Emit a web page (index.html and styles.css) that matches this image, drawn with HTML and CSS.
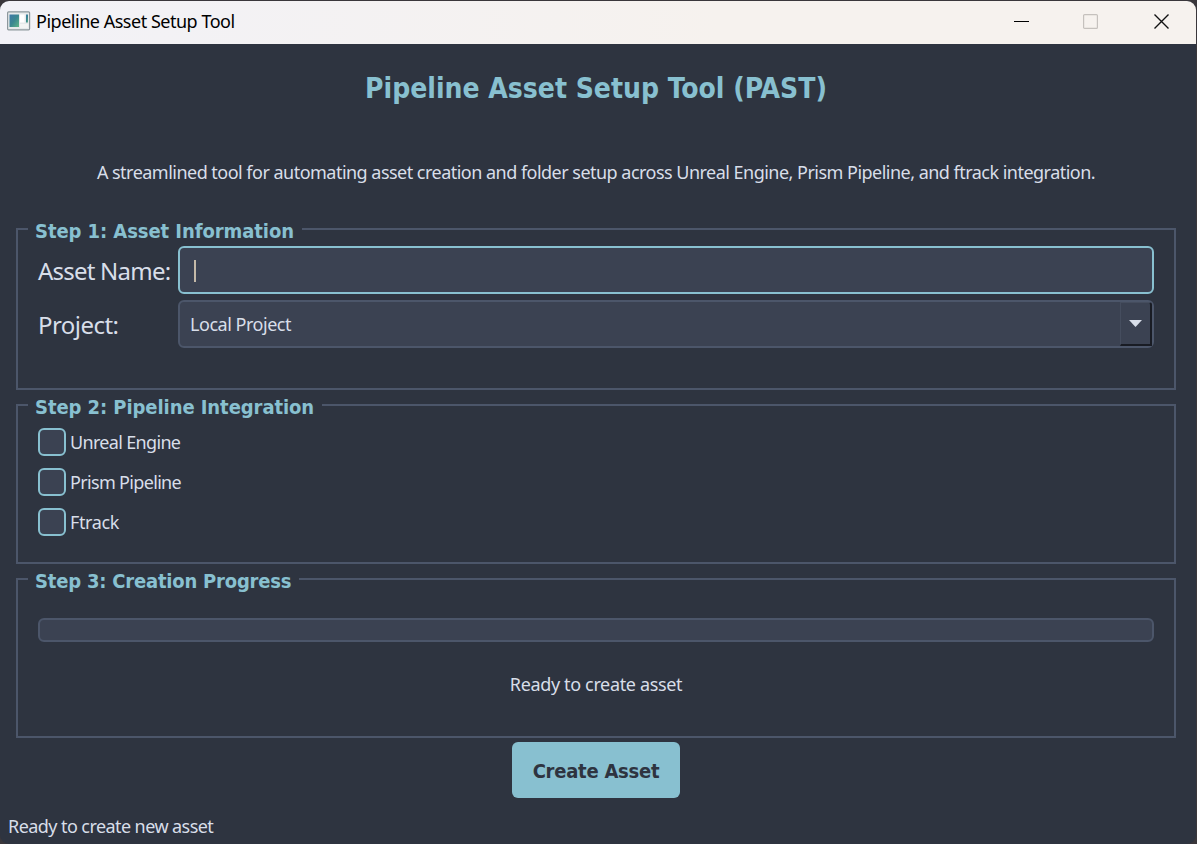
FILE: index.html
```html
<!DOCTYPE html>
<html lang="en">
<head>
<meta charset="utf-8">
<title>Pipeline Asset Setup Tool</title>
<link rel="stylesheet" href="styles.css">
</head>
<body>
<div class="window">
  <header class="titlebar">
    <svg class="app-icon" width="24" height="20" viewBox="0 0 24 20">
      <defs><linearGradient id="g" x1="0" y1="0" x2="1" y2="1"><stop offset="0" stop-color="#3f78a8"/><stop offset=".5" stop-color="#3a8790"/><stop offset="1" stop-color="#5fb587"/></linearGradient></defs>
      <rect x=".6" y=".8" width="22" height="18" rx="1" fill="#e6eaeb" stroke="#8c979c" stroke-width="1.2"/>
      <rect x="2.500" y="3.500" width="9.500" height="12.500" fill="url(#g)"/>
      <rect x="13" y="3.500" width="4.500" height="8" fill="#fff"/>
      <rect x="19" y="3.500" width="2" height="8" fill="url(#g)"/>
      <rect x="13" y="13" width="8" height="4" fill="#f3f5f4"/>
    </svg>
    <span class="titlebar-text">Pipeline Asset Setup Tool</span>
    <div class="controls">
      <svg width="16" height="16" viewBox="0 0 16 16"><path d="M0 7.500h15" stroke="#000" fill="none"/></svg>
      <svg class="maximize" width="16" height="16" viewBox="0 0 16 16"><rect x=".6" y=".6" width="13.800" height="13.800" rx="1" stroke="#c5c1bd" stroke-width="1.200" fill="none"/></svg>
      <svg width="16" height="16" viewBox="0 0 16 16"><path d="M.5 .5l14 14M14.500 .5l-14 14" stroke="#111" stroke-width="1.400" fill="none"/></svg>
    </div>
  </header>
  <main class="content">
    <h1 class="title">Pipeline Asset Setup Tool (PAST)</h1>
    <p class="intro">A streamlined tool for automating asset creation and folder setup across Unreal Engine, Prism Pipeline, and ftrack integration.</p>
    <fieldset class="group info">
      <legend class="legend">Step 1: Asset Information</legend>
      <div class="form">
        <label class="label name">Asset Name:</label>
        <div class="field focused"><span class="caret"></span></div>
        <label class="label project">Project:</label>
        <div class="field combo"><span class="value">Local Project</span>
          <span class="drop"><svg width="13" height="7" viewBox="0 0 13 7"><path d="M0 0h13L6.500 7z" fill="#d8dee9"/></svg></span>
        </div>
      </div>
    </fieldset>
    <fieldset class="group checks">
      <legend class="legend">Step 2: Pipeline Integration</legend>
      <div class="options">
        <label class="option"><span class="box"></span>Unreal Engine</label>
        <label class="option"><span class="box"></span>Prism Pipeline</label>
        <label class="option short"><span class="box"></span>Ftrack</label>
      </div>
    </fieldset>
    <fieldset class="group creation">
      <legend class="legend">Step 3: Creation Progress</legend>
      <div class="bar"></div>
      <div class="state">Ready to create asset</div>
    </fieldset>
    <button class="create">Create Asset</button>
  </main>
  <footer class="status">Ready to create new asset</footer>
</div>
</body>
</html>
```
FILE: styles.css
```css
* { box-sizing: border-box; }
body {
  margin: 0;
  width: 1197px;
  height: 844px;
  padding: 1px 1px 0 0;
  overflow: hidden;
  background: #3a373b;
  font: 18px/24px "Noto Sans", "Open Sans", sans-serif;
  color: #d8dee9;
  white-space: nowrap;
}
.window {
  display: flex;
  flex-direction: column;
  height: 843px;
  background: #2e3440;
  border-radius: 9px;
  overflow: hidden;
}
.titlebar {
  display: flex;
  align-items: center;
  height: 43px;
  padding: 0 0 3px 7px;
  background: linear-gradient(90deg, #f2f2f7, #f6f2ee 60%);
  color: #000;
}
.titlebar-text { margin-left: 5px; letter-spacing: -0.48px; }
.controls { display: flex; gap: 54px; margin-left: auto; padding: 1px 26px 0 0; }
.controls svg { display: block; }
.controls .maximize { margin: 0 1px 0 -1px; }
.content { display: flex; flex-direction: column; height: 755px; padding: 0 20px 0 16px; }
.title {
  margin: 26px 0 0;
  height: 36px;
  font-family: "DejaVu Sans Condensed", "DejaVu Sans", sans-serif;
  font-stretch: condensed;
  font-size: 28px;
  line-height: 38px;
  font-weight: 700;
  color: #88c0d0;
  text-align: center;
}
.intro { margin: 55px 0 32px; height: 23px; line-height: 23px; text-align: center; letter-spacing: -0.52px; }
.group {
  margin: 0 0 2px;
  padding: 0 20px;
  border: 2px solid #4c566a;
  min-width: 0;
  height: 172px;
}
.group.info { height: 174px; }
.group.creation { margin-bottom: 4px; }
.legend {
  margin-left: -10px;
  padding: 0 8px 0 7px;
  height: 26px;
  font-family: "DejaVu Sans Condensed", "DejaVu Sans", sans-serif;
  font-stretch: condensed;
  font-size: 20px;
  line-height: 31px;
  font-weight: 700;
  letter-spacing: -0.07px;
  color: #88c0d0;
}
.creation .legend { letter-spacing: -0.2px; }
.form {
  display: grid;
  grid-template-columns: 140px 1fr;
  grid-auto-rows: 48px;
  row-gap: 6px;
  align-items: center;
  padding-top: 4px;
}
.label { padding-top: 2px; font-size: 24px; line-height: 46px; }
.name { letter-spacing: -0.78px; }
.project { letter-spacing: -0.55px; }
.field {
  display: flex;
  align-items: center;
  height: 48px;
  padding-left: 10px;
  background: #3b4252;
  border: 2px solid #4c566a;
  border-radius: 6px;
}
.focused { padding: 2px 0 0 14px; border-color: #88c0d0; }
.caret { width: 2px; height: 22px; background: #c4b9a8; }
.value { letter-spacing: -0.47px; }
.drop {
  display: flex;
  align-items: center;
  justify-content: center;
  width: 32px;
  height: 44px;
  margin-left: auto;
  border: 1px solid #454d5e;
  border-right: 2px solid #191c24;
  border-bottom: 2px solid #191c24;
  border-top-right-radius: 3px;
}
.options { display: flex; flex-direction: column; gap: 12px; padding-top: 10px; }
.option { display: flex; align-items: center; gap: 4px; height: 28px; letter-spacing: -0.67px; }
.short { letter-spacing: -0.4px; }
.box { width: 28px; height: 28px; background: #3b4252; border: 2px solid #88c0d0; border-radius: 6px; }
.bar { height: 24px; margin-top: 26px; background: #3b4252; border: 2px solid #4c566a; border-radius: 6px; }
.state { margin-top: 30px; text-align: center; letter-spacing: -0.35px; }
.create {
  align-self: center;
  width: 168px;
  height: 56px;
  padding: 2px 0 0;
  border: 0;
  border-radius: 6px;
  background: #88c0d0;
  color: #2e3440;
  font: 700 20px/54px "DejaVu Sans Condensed", "DejaVu Sans", sans-serif;
  font-stretch: condensed;
  letter-spacing: -0.25px;
}
.status { padding: 15px 0 0 8px; letter-spacing: -0.57px; }
```
